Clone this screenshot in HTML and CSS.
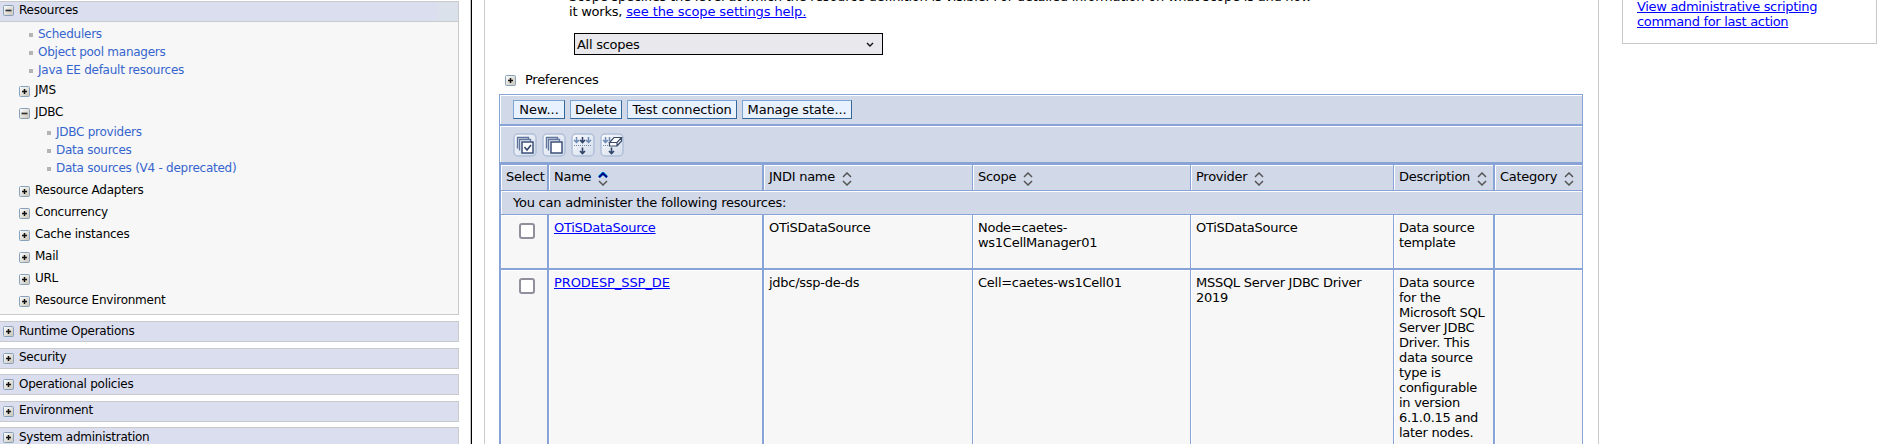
FILE: index.html
```
<!DOCTYPE html>
<html lang="en">
<head>
<meta charset="utf-8">
<title>Data sources</title>
<link rel="stylesheet" href="styles.css">
</head>
<body>
<svg class="defs" width="0" height="0">
  <defs>
    <linearGradient id="g" x1="0" y1="0" x2="1" y2="1"><stop offset="0" stop-color="#fff"/><stop offset="1" stop-color="#c9c3b6"/></linearGradient>
    <linearGradient id="gb" x1="0" y1="0" x2="1" y2="1"><stop offset="0" stop-color="#fafbfd"/><stop offset="1" stop-color="#d3dceb"/></linearGradient>
    <g id="box"><rect x=".5" y=".5" width="10" height="10" rx="1" fill="url(#g)" stroke="#86a2bc"/></g>
    <symbol id="plus" viewBox="0 0 11 11"><use href="#box"/><path d="M3 5.500h5M5.500 3v5" stroke="#111" stroke-width="1.500"/></symbol>
    <symbol id="minus" viewBox="0 0 11 11"><use href="#box"/><path d="M2.500 5.500h6" stroke="#333" stroke-width="1.700"/></symbol>
    <symbol id="sort" viewBox="0 0 10 14"><path d="M1 5L5 1l4 4"/><path d="M1 9l4 4 4-4"/></symbol>
    <symbol id="sortasc" viewBox="0 0 10 14"><path d="M1 5L5 1l4 4" stroke="#1ac0d0" stroke-width="3"/><path d="M1 5.300L5 1.500l4 3.800" stroke="#000090" stroke-width="2"/><path d="M1 9l4 4 4-4"/></symbol>
  </defs>
</svg>
<div class="page">
  <nav class="side">
    <section class="group open">
      <h2 class="head"><svg class="tw"><use href="#minus"/></svg>Resources</h2>
      <div class="tree">
        <a class="leaf">Schedulers</a>
        <a class="leaf">Object pool managers</a>
        <a class="leaf">Java EE default resources</a>
        <div class="node"><svg class="tw"><use href="#plus"/></svg>JMS</div>
        <div class="node"><svg class="tw"><use href="#minus"/></svg>JDBC</div>
        <div class="sub">
          <a class="leaf">JDBC providers</a>
          <a class="leaf">Data sources</a>
          <a class="leaf">Data sources (V4 - deprecated)</a>
        </div>
        <div class="node"><svg class="tw"><use href="#plus"/></svg>Resource Adapters</div>
        <div class="node"><svg class="tw"><use href="#plus"/></svg>Concurrency</div>
        <div class="node"><svg class="tw"><use href="#plus"/></svg>Cache instances</div>
        <div class="node"><svg class="tw"><use href="#plus"/></svg>Mail</div>
        <div class="node"><svg class="tw"><use href="#plus"/></svg>URL</div>
        <div class="node"><svg class="tw"><use href="#plus"/></svg>Resource Environment</div>
      </div>
    </section>
    <h2 class="head"><svg class="tw"><use href="#plus"/></svg>Runtime Operations</h2>
    <h2 class="head"><svg class="tw"><use href="#plus"/></svg>Security</h2>
    <h2 class="head"><svg class="tw"><use href="#plus"/></svg>Operational policies</h2>
    <h2 class="head"><svg class="tw"><use href="#plus"/></svg>Environment</h2>
    <h2 class="head"><svg class="tw"><use href="#plus"/></svg>System administration</h2>
  </nav>
  <div class="divider"></div>
  <main class="main">
    <p class="intro">Scope specifies the level at which the resource definition is visible. For detailed information on what scope is and how<br>it works, <a>see the scope settings help.</a></p>
    <div class="select">All scopes<svg width="8" height="6" viewBox="0 0 8 6"><path d="M1 1l3 3 3-3" fill="none" stroke="#111" stroke-width="1.4"/></svg></div>
    <div class="prefs"><svg class="tw"><use href="#plus"/></svg>Preferences</div>
    <div class="table">
      <div class="bar buttons">
        <span class="btn b1">New...</span><span class="btn b2">Delete</span><span class="btn b3">Test connection</span><span class="btn b4">Manage state...</span>
      </div>
      <div class="bar tools">
        <svg class="tool" viewBox="0 0 24 24"><rect class="tb" fill="url(#gb)" x="1" y="1" width="22" height="22" rx="4"/><path class="sh" d="M4.500 15.500v-11h11v2M6.500 17.500v-11h11v2"/><rect class="pg" x="9" y="9" width="11" height="11"/><path class="ck" d="M11.500 14l2.500 3 4-5"/></svg>
        <svg class="tool" viewBox="0 0 24 24"><rect class="tb" fill="url(#gb)" x="1" y="1" width="22" height="22" rx="4"/><path class="sh" d="M4.500 15.500v-11h11v2M6.500 17.500v-11h11v2"/><rect class="pg" x="9" y="9" width="11" height="11"/></svg>
        <svg class="tool" viewBox="0 0 24 24"><rect class="tb" fill="url(#gb)" x="1" y="1" width="22" height="22" rx="4"/><path class="ar" d="M5.500 4v6M3 7l2.500 2.500L8 7M17.500 4v6M15 7l2.500 2.500L20 7"/><path class="dk" d="M11.500 4v6M9 7l2.500 2.500L14 7M11.500 14.500v6M9 18l2.500 2.500L14 18"/><path class="dt" d="M3 12.500h18"/></svg>
        <svg class="tool" viewBox="0 0 24 24"><rect class="tb" fill="url(#gb)" x="1" y="1" width="22" height="22" rx="4"/><path class="ar" d="M5.500 4v6M3 7l2.500 2.500L8 7M9.500 4v4"/><path class="dk" d="M11.500 14.500v6M9 18l2.500 2.500L14 18"/><path class="dt" d="M3 12.500h7"/><path class="er" d="M9.500 9.500l4.500-5h7.500l-4.500 5zM9.500 9.500v3.500H17v-3.500M17 13l4.500-5V4.500"/></svg>
      </div>
      <div class="row th">
        <div class="c">Select</div>
        <div class="c">Name<svg class="sort"><use href="#sortasc"/></svg></div>
        <div class="c">JNDI name<svg class="sort"><use href="#sort"/></svg></div>
        <div class="c">Scope<svg class="sort"><use href="#sort"/></svg></div>
        <div class="c">Provider<svg class="sort"><use href="#sort"/></svg></div>
        <div class="c">Description<svg class="sort"><use href="#sort"/></svg></div>
        <div class="c">Category<svg class="sort"><use href="#sort"/></svg></div>
      </div>
      <div class="note">You can administer the following resources:</div>
      <div class="row r1">
        <div class="c"><span class="cb"></span></div>
        <div class="c"><a>OTiSDataSource</a></div>
        <div class="c">OTiSDataSource</div>
        <div class="c">Node=caetes-<br>ws1CellManager01</div>
        <div class="c">OTiSDataSource</div>
        <div class="c">Data source<br>template</div>
        <div class="c"></div>
      </div>
      <div class="row r2">
        <div class="c"><span class="cb"></span></div>
        <div class="c"><a class="caps">PRODESP_SSP_DE</a></div>
        <div class="c">jdbc/ssp-de-ds</div>
        <div class="c">Cell=caetes-ws1Cell01</div>
        <div class="c">MSSQL Server JDBC Driver<br>2019</div>
        <div class="c">Data source<br>for the<br>Microsoft SQL<br>Server JDBC<br>Driver. This<br>data source<br>type is<br>configurable<br>in version<br>6.1.0.15 and<br>later nodes.</div>
        <div class="c"></div>
      </div>
    </div>
  </main>
  <aside class="help"><a>View administrative scripting<br>command for last action</a></aside>
</div>
</body>
</html>
```

FILE: styles.css
```
* { box-sizing: border-box; }
body { margin: 0; background: #fff; color: #000; font: 13px/15px Verdana, "DejaVu Sans", sans-serif; letter-spacing: -0.27px; overflow: hidden; }
a { color: #00f; text-decoration: underline; }
.defs { position: absolute; }
.page { display: flex; align-items: flex-start; height: 444px; overflow: hidden; }

.side { width: 459px; margin-right: 11px; flex: none; padding-top: 1px; font-size: 12px; line-height: 18px; letter-spacing: -0.25px; }
.head { display: flex; align-items: center; height: 21px; margin: 0 0 5.500px; padding: 0 0 2px 3px; border: 1px solid #c8cacc; border-left: 0; background: #dbdeef; font: inherit; }
.tw { width: 11px; height: 11px; flex: none; margin: 2px 5px 0 0; }
.group { margin-bottom: 6px; }
.group .head { margin: 0; padding-bottom: 4px; }
.open .head { background: linear-gradient(90deg, #dbdeef 95%, #dbe1ea 96%); }
.tree { height: 293px; padding-top: 3px; background: #f7f7f7; border: 1px solid #c8cacc; border-width: 0 1px 1px 0; }
.leaf { display: flex; align-items: center; height: 18px; padding-left: 29px; color: #3565cd; text-decoration: none; }
.leaf::before { content: ""; width: 4px; height: 4px; margin: 1px 5px 0 0; background: #b4b4b4; }
.sub { padding-bottom: 2px; }
.sub .leaf { padding-left: 47px; }
.node { display: flex; align-items: center; height: 22px; padding-left: 19px; }

.divider { width: 2px; height: 444px; flex: none; background: #000; border-left: 1px solid #c4c4c4; }
.main { width: 1115px; height: 444px; flex: none; margin-left: 12px; padding: 0 15px 0 14px; border: 1px solid #ccc; border-width: 0 1px; }
.intro { margin: -11px 0 0 70px; white-space: nowrap; letter-spacing: -0.22px; }
.intro a { letter-spacing: -0.1px; }
.select { display: flex; align-items: center; justify-content: space-between; width: 309px; height: 22px; margin: 14px 0 0 75px; padding: 1px 8px 0 2px; border: 1px solid #000; background: #e9e9ed; }
.prefs { display: flex; align-items: center; height: 20px; margin: 14px 0 5px 6px; }
.prefs .tw { margin: 3px 9px 0 0; }

.table { width: 1084px; border-top: 1px solid #88a4d7; }
.bar { display: flex; align-items: center; border: 1px solid #88a4d7; border-width: 0 1px 2px; background: #d1d8e8; box-shadow: inset 1px 1px #fff; padding-left: 13px; }
.buttons { height: 31px; gap: 5px; letter-spacing: -0.15px; }
.btn { height: 19px; border: 1px solid #336699; border-top-color: #7fa6d0; border-left-color: #7fa6d0; background: #e8f1ff; text-align: center; line-height: 18px; }
.b1, .b2 { width: 52px; }
.b1 { letter-spacing: 0; }
.b3, .b4 { width: 110px; }
.tools { height: 39px; gap: 5px; padding-top: 2px; border-bottom-width: 3px; }
.tool { width: 24px; height: 24px; }
.tb { stroke: #b0c0d9; stroke-width: 1.500; }
.sh { fill: none; stroke: #60769c; stroke-width: 1.400; }
.pg { fill: #fff; stroke: #3b5078; stroke-width: 1.500; }
.ck, .dk { fill: none; stroke: #2f4468; stroke-width: 1.600; }
.ar { fill: none; stroke: #6d8bb5; stroke-width: 1.500; }
.dt { stroke: #7288ad; stroke-dasharray: 1 1; }
.er { fill: #fff; stroke: #3b4a66; stroke-width: 1.200; }

.row { display: grid; grid-template-columns: 48px 215px 210px 218px 203px 100px 90px; }
.c { border-left: 1px solid #88a4d7; padding: 5px 0 0 5px; background: #f7f7f7; box-shadow: inset 1px 1px #fff; white-space: nowrap; }
.c:nth-child(-n+3), .c:last-child { border-left-width: 2px; }
.c:last-child { border-right: 1px solid #88a4d7; }
.caps { letter-spacing: -0.08px; }
.th { height: 26px; border-bottom: 1px solid #88a4d7; }
.th .c { display: flex; align-items: center; padding-top: 0; padding-bottom: 2px; background: #d1d8e8; }
.sort { width: 10px; height: 14px; margin: 4px 0 0 7px; fill: none; stroke: #555; stroke-width: 1.500; }
.note { height: 24px; padding: 4px 0 0 12px; border: solid #88a4d7; border-width: 0 1px 1px 2px; background: #d1d8e8; box-shadow: inset 1px 1px #fff; letter-spacing: -0.23px; }
.r1 { height: 55px; border-bottom: 2px solid #88a4d7; }
.r2 { height: 180px; }
.cb { display: block; width: 16px; height: 16px; margin: 3px 0 0 13px; border: 2px solid #8f8f9d; border-radius: 3px; background: #fff; }

.help { flex: none; width: 255px; height: 44px; margin-left: 23px; border: 1px solid #c8c8c8; border-top: 0; padding-left: 14px; }
.help a { display: block; margin-top: -1px; letter-spacing: -0.32px; }
```
